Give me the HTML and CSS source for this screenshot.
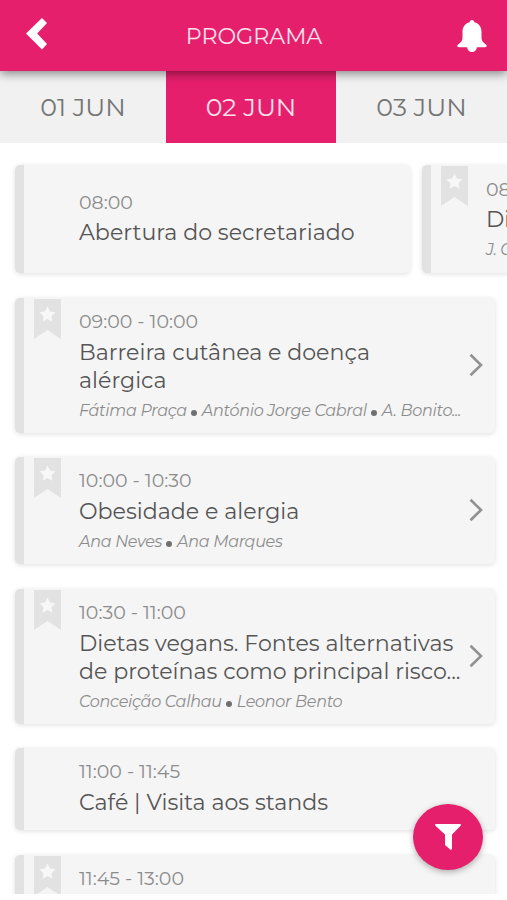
FILE: index.html
```html
<!DOCTYPE html>
<html lang="pt">
<head>
    <meta charset="UTF-8">
    <meta name="viewport" content="width=device-width, initial-scale=1.0">
    <title>Programa</title>
    <link rel="stylesheet" href="styles.css">
</head>
<body>

    <!-- Icons -->
    <svg class="sprite">
        <symbol id="bookmark" viewBox="0 0 27 40">
            <path fill="#e2e2e2" d="M0 0h27v40L13.500 31 0 40z"/>
            <path fill="#f7f7f7" d="M13.500 7.500l2.500 5 5.500.8-4 3.900.9 5.500-4.900-2.600-4.900 2.600.9-5.500-4-3.900 5.500-.8z"/>
        </symbol>
        <symbol id="chevron" viewBox="0 0 14 24">
            <path fill="none" stroke="#929292" stroke-width="2.600" d="M1.500 1.800L12 12 1.500 22.200"/>
        </symbol>
    </svg>

    <div class="app">
        <header class="topbar">
            <svg class="back" viewBox="0 0 22 32"><path fill="#fff" d="M16 0l5 5L11.200 15.500 21 26l-5 5.500L0 15.500z"/></svg>
            <h1>PROGRAMA</h1>
            <svg class="bell" viewBox="0 0 30 32"><path fill="#fff" d="M15 0c1.400 0 2.300 1 2.300 2.300C22 3.400 24.500 7 24.500 12v5c0 4 1.500 5.500 4.500 7.500 1.300 1 .8 2.700-.8 2.700H20c-.5 2.800-2.400 4.800-5 4.800s-4.500-2-5-4.800H1.800C.2 27.200-.3 25.500 1 24.500c3-2 4.500-3.500 4.500-7.500v-5c0-5 2.500-8.600 7.200-9.700C12.700 1 13.600 0 15 0z"/></svg>
        </header>

        <nav class="tabs">
            <a class="tab">01 JUN</a>
            <a class="tab active">02 JUN</a>
            <a class="tab">03 JUN</a>
        </nav>

        <main class="program">
            <div class="row">
                <article class="card short">
                    <div class="info">
                        <div class="time">08:00</div>
                        <h2>Abertura do secretariado</h2>
                    </div>
                </article>
                <article class="card">
                    <svg class="bookmark"><use href="#bookmark"/></svg>
                    <div class="info">
                        <div class="time">08</div>
                        <h2>Di</h2>
                        <div class="speakers">J. C</div>
                    </div>
                </article>
            </div>

            <article class="card">
                <svg class="bookmark"><use href="#bookmark"/></svg>
                <div class="info">
                    <div class="time">09:00 - 10:00</div>
                    <h2>Barreira cutânea e doença<br>alérgica</h2>
                    <div class="speakers">Fátima Praça<span class="dot"></span>António Jorge Cabral<span class="dot"></span>A. Bonito...</div>
                </div>
                <svg class="chevron"><use href="#chevron"/></svg>
            </article>

            <article class="card">
                <svg class="bookmark"><use href="#bookmark"/></svg>
                <div class="info">
                    <div class="time">10:00 - 10:30</div>
                    <h2>Obesidade e alergia</h2>
                    <div class="speakers">Ana Neves<span class="dot"></span>Ana Marques</div>
                </div>
                <svg class="chevron"><use href="#chevron"/></svg>
            </article>

            <article class="card">
                <svg class="bookmark"><use href="#bookmark"/></svg>
                <div class="info">
                    <div class="time">10:30 - 11:00</div>
                    <h2>Dietas vegans. Fontes alternativas<br>de proteínas como principal risco...</h2>
                    <div class="speakers">Conceição Calhau<span class="dot"></span>Leonor Bento</div>
                </div>
                <svg class="chevron"><use href="#chevron"/></svg>
            </article>

            <article class="card short">
                <div class="info">
                    <div class="time">11:00 - 11:45</div>
                    <h2>Café | Visita aos stands</h2>
                </div>
            </article>

            <article class="card last">
                <svg class="bookmark"><use href="#bookmark"/></svg>
                <div class="info">
                    <div class="time">11:45 - 13:00</div>
                </div>
            </article>
        </main>

        <button type="button" class="filter">
            <svg viewBox="0 0 26 26"><path fill="#fff" d="M1 0h24c1 0 1.200 1 .6 1.700L17 10.500v14c0 1.200-1 1.500-1.800.9L10 21V10.500L.4 1.700C-.2 1 0 0 1 0z"/></svg>
        </button>
    </div>

</body>
</html>
```
FILE: styles.css
```css
:root {
    --primary: #e61f6d;
    --card: #f5f5f5;
    --stripe: #e2e2e2;
    --title: #555;
    --muted: #8c8c8c;
}

* {
    margin: 0;
    padding: 0;
    box-sizing: border-box;
}

body {
    background: #fff;
    font-family: Montserrat, Inter, sans-serif;
}

.sprite {
    display: none;
}

.app {
    position: relative;
    height: 894px;
    overflow: hidden;
}

.topbar {
    position: relative;
    z-index: 1;
    display: flex;
    align-items: center;
    justify-content: space-between;
    height: 71px;
    padding: 0 20px 0 26px;
    background: var(--primary);
    box-shadow: 0 2px 10px rgba(0,0,0,0.5);
}

.topbar h1 {
    padding: 2px 0 0 3px;
    color: #fce0eb;
    font-size: 22.2px;
    font-weight: 400;
}

.back {
    width: 22px;
    height: 32px;
    margin-top: -4px;
}

.bell {
    width: 30px;
    height: 32px;
}

.tabs {
    display: grid;
    grid-template-columns: 166px 170px 1fr;
    height: 72px;
    background: #f1f1f1;
}

.tab {
    display: flex;
    align-items: center;
    justify-content: center;
    padding-bottom: 1px;
    color: #757575;
    font-size: 25.2px;
}

.tab.active {
    background: var(--primary);
    color: #fce0eb;
}

.program {
    display: flex;
    flex-direction: column;
    gap: 24.5px;
    padding: 22px 12px 0 15px;
}

.row {
    display: flex;
    gap: 12px;
    height: 108px;
}

.card {
    display: flex;
    align-items: center;
    flex-shrink: 0;
    position: relative;
    padding: 12px 12px 10px 55px;
    background: var(--card);
    border-left: 9px solid var(--stripe);
    border-radius: 5px;
    box-shadow: 0 1px 5px rgba(0,0,0,0.13);
}

.card.short {
    padding-bottom: 13px;
}

.card.last {
    height: 80px;
    align-items: flex-start;
}

.row .card {
    width: 395px;
}

.info {
    flex: 1;
    min-width: 0;
    white-space: nowrap;
}

.time {
    color: var(--muted);
    font-size: 19px;
    line-height: 24px;
}

.card h2 {
    margin-top: 5px;
    color: var(--title);
    font-size: 22.15px;
    font-weight: 400;
    line-height: 28px;
}

.row .card h2 {
    margin-top: 4px;
}

.speakers {
    margin-top: 4px;
    color: var(--muted);
    font-size: 16px;
    font-style: italic;
    line-height: 24px;
    letter-spacing: -0.3px;
}

.dot {
    display: inline-block;
    width: 6px;
    height: 6px;
    margin: 0 5px 0 4px;
    border-radius: 50%;
    background: #707070;
}

.bookmark {
    position: absolute;
    top: 1px;
    left: 10px;
    width: 27px;
    height: 40px;
}

.chevron {
    flex-shrink: 0;
    width: 14px;
    height: 24px;
    margin-top: -3px;
}

.filter {
    position: absolute;
    right: 24px;
    bottom: 24px;
    display: flex;
    align-items: center;
    justify-content: center;
    width: 70px;
    height: 66px;
    border: none;
    border-radius: 50%;
    background: var(--primary);
    box-shadow: 0 2px 6px rgba(0,0,0,0.3);
}

.filter svg {
    width: 26px;
    height: 26px;
}
```
